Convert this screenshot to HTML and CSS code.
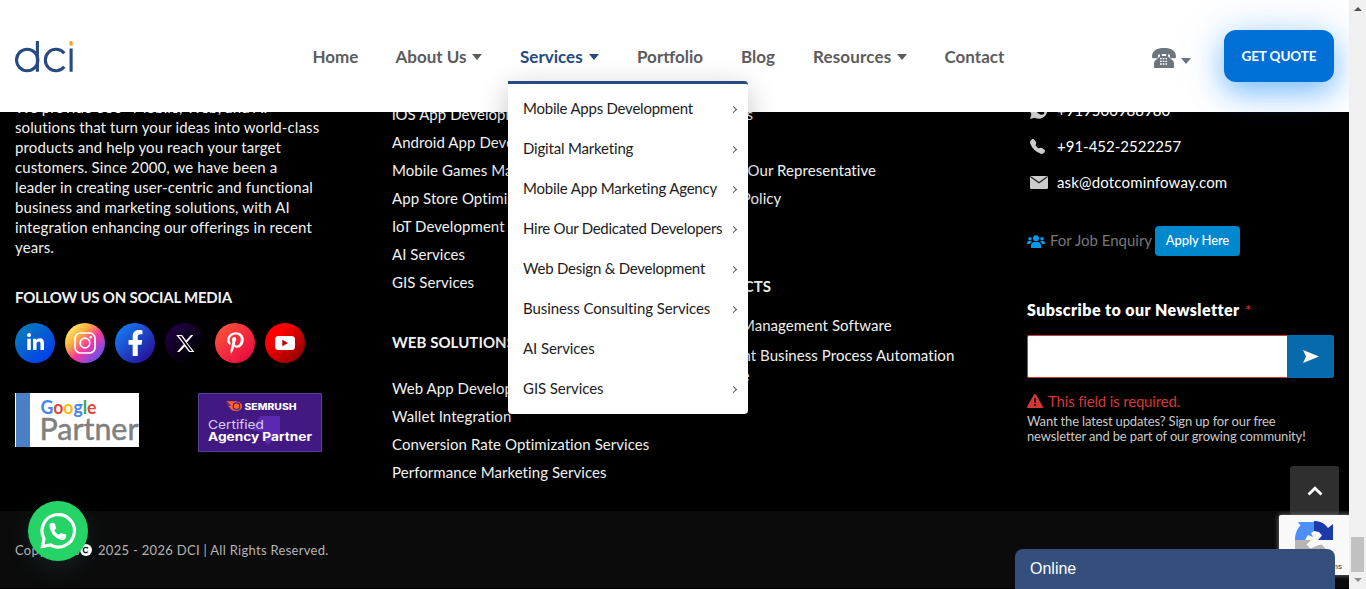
FILE: index.html
```html
<!DOCTYPE html>
<html lang="en">
<head>
<meta charset="utf-8">
<title>DCI</title>
<link rel="stylesheet" href="styles.css">
</head>
<body>
<div class="page">
  <header class="header">
    <a class="logo"><svg width="60" height="34" viewBox="0 0 60 34" fill="none" stroke="#264a82" stroke-width="3.1"><circle cx="12.2" cy="20" r="10.7"/><path d="M22.4 1v30.7M49.3 13.2A10.7 10.7 0 1 0 49.3 26.8M56.1 8.5v23.2"/><path stroke="#f9a02c" d="M56.1 1v4.6"/></svg></a>
    <nav class="nav">
      <a>Home</a>
      <a>About Us<i class="caret"></i></a>
      <a class="active">Services<i class="caret"></i></a>
      <a>Portfolio</a>
      <a>Blog</a>
      <a class="resources">Resources<i class="caret"></i></a>
      <a>Contact</a>
    </nav>
    <div class="call">
      <svg width="24" height="20" viewBox="0 0 24 20"><path fill="#6c757d" d="M0 8.500C0 2.500 5 0 12 0s12 2.500 12 8.500c0 1.300-.3 1.700-1.200 1.700h-3.400c-1 0-1.400-.5-1.400-1.500V6.800c-2-1.100-10-1.100-12 0v1.900c0 1-.4 1.500-1.400 1.500H1.200C.3 10.200 0 9.800 0 8.500zM8 6h2v2h4V6h2v2.200l4.700 4.400c1 1 1.300 2 1.300 3.200V20H2v-4.200c0-1.200.3-2.200 1.300-3.200L8 8.200z"/><path stroke="#fff" stroke-width="1.300" stroke-dasharray="1.700 1" d="M8 10.600h8M8 13.300h8M8 16h8"/></svg>
      <i class="caret"></i>
    </div>
    <a class="quote">GET QUOTE</a>
  </header>

  <div class="menu">
    <a><span class="m1">Mobile Apps Development</span><i></i></a>
    <a><span class="m2">Digital Marketing</span><i></i></a>
    <a><span class="m3">Mobile App Marketing Agency</span><i></i></a>
    <a><span class="m4">Hire Our Dedicated Developers</span><i></i></a>
    <a><span class="m5">Web Design &amp; Development</span><i></i></a>
    <a><span class="m6">Business Consulting Services</span><i></i></a>
    <a><span class="m6">AI Services</span></a>
    <a><span class="m6">GIS Services</span><i></i></a>
  </div>

  <footer class="footer">
    <section class="about">
      <p>We provide 360° Mobile, Web, and AI<br>solutions that turn your ideas into world-class<br>products and help you reach your target<br>customers. Since 2000, we have been a<br>leader in creating user-centric and functional<br>business and marketing solutions, with AI<br>integration enhancing our offerings in recent<br>years.</p>
      <h4>FOLLOW US ON SOCIAL MEDIA</h4>
      <div class="social">
        <a class="li"><svg width="17" height="17" viewBox="0 0 448 448"><path d="M100.300 448H7.400V148.900h92.900zM53.800 108.100C24.100 108.100 0 83.500 0 53.800a53.800 53.800 0 0 1 107.600 0c0 29.700-24.100 54.300-53.800 54.300zM447.900 448h-92.700V302.400c0-34.700-.7-79.200-48.300-79.200-48.300 0-55.700 37.700-55.700 76.700V448h-92.700V148.900h89v40.800h1.300c12.400-23.500 42.700-48.300 87.900-48.300 94 0 111.300 61.900 111.300 142.300V448z"/></svg></a>
        <a class="ig"><svg width="22" height="22" viewBox="0 0 22 22"><g fill="none" stroke="#fff" stroke-width="1.700"><rect x="1" y="1" width="20" height="20" rx="5.500"/><circle cx="11" cy="11" r="4.800"/></g><circle cx="16.700" cy="5.300" r="1.300"/></svg></a>
        <a class="fb"><svg width="17" height="26" viewBox="0 0 320 512"><path d="M279 288l14.300-92.700h-89v-60c0-25.400 12.400-50.100 52.200-50.100H297V6.300S260.400 0 225.400 0c-73.200 0-121.100 44.400-121.100 124.700v70.600H22.900V288h81.400v224h100.200V288z"/></svg></a>
        <a class="tw"><svg width="19" height="19" viewBox="1 2 22 20"><path d="M18.244 2.250h2.800l-7.400 8.460 8.702 11.040H16.170l-5.014-6.417L4.990 21.750H2.180l7.730-8.835L1.254 2.250H8.080l4.713 6.231zm-1.061 18.320h2.433L6.984 3.426H4.317z"/></svg></a>
        <a class="pi"><svg width="17" height="22" viewBox="0 0 384 512"><path d="M204 6.500C101.400 6.500 0 74.900 0 185.600 0 256 39.600 296 63.600 296c9.900 0 15.600-27.600 15.600-35.400 0-9.300-23.700-29.100-23.700-67.800 0-80.400 61.200-137.400 140.400-137.400 68.100 0 118.500 38.700 118.500 109.800 0 53.100-21.300 152.700-90.300 152.700-24.900 0-46.200-18-46.200-43.800 0-37.800 26.400-74.400 26.400-113.400 0-66.200-93.900-54.200-93.900 25.800 0 16.800 2.100 35.400 9.600 50.700-13.800 59.400-42 147.900-42 209.100 0 18.900 2.700 37.500 4.500 56.400 3.400 3.800 1.700 3.400 6.900 1.500 50.400-69 48.600-82.500 71.400-172.800 12.300 23.400 44.100 36 69.300 36 106.200 0 153.900-103.500 153.900-196.800C384 71.300 298.200 6.500 204 6.500z"/></svg></a>
        <a class="yt"><svg width="20" height="14" viewBox="0 0 20 14"><rect width="20" height="14" rx="3.500"/><path fill="#c00000" d="M7.300 3.800v6.400L13 7z"/></svg></a>
      </div>
      <div class="badges">
        <svg width="124" height="54" viewBox="0 0 124 54"><path fill="#fff" d="M0 0h124v54H0z"/><path fill="#4a7fc3" d="M1 0h14v54H1z"/><text class="google" x="25.500" y="20.500" textLength="56" lengthAdjust="spacingAndGlyphs"><tspan fill="#4285f4">G</tspan><tspan fill="#ea4335">o</tspan><tspan fill="#fbbc05">o</tspan><tspan fill="#4285f4">g</tspan><tspan fill="#34a853">l</tspan><tspan fill="#ea4335">e</tspan></text><text class="partner" x="24.500" y="47" textLength="99" lengthAdjust="spacingAndGlyphs">Partner</text></svg>
        <svg width="124" height="59" viewBox="0 0 124 59"><path fill="#421983" stroke="#59409d" d="M.5.500h123v58H.5z"/><path fill="#5b28b0" d="M62 23h20v22h-6l-6 7-6-7v-6l-10-2z"/><path fill="#ff642d" d="M28 8.200h9c4 0 7 2.300 7 5s-2.700 4.800-6 4.800c-3.400 0-6-2-7-4.500l-2-.7h4l-1-1.300-5-.8h5z"/><circle cx="38.500" cy="13.200" r="3.300" fill="none" stroke="#421983" stroke-width="1.100"/><text class="semrush" x="46.500" y="16.500" textLength="52" lengthAdjust="spacingAndGlyphs">SEMRUSH</text><text class="cert" x="10" y="36" textLength="56" lengthAdjust="spacingAndGlyphs">Certified</text><text class="agency" x="10" y="48" textLength="104" lengthAdjust="spacingAndGlyphs">Agency Partner</text></svg>
      </div>
    </section>

    <section class="links">
      <a>iOS App Development</a><a>Android App Development</a><a>Mobile Games Marketing</a><a>App Store Optimization</a><a>IoT Development</a><a>AI Services</a><a>GIS Services</a>
      <h4>WEB SOLUTIONS</h4>
      <a>Web App Development</a><a>Wallet Integration</a><a>Conversion Rate Optimization Services</a><a>Performance Marketing Services</a>
    </section>

    <section class="links company">
      <a>Locations</a><a>Blog</a><a>Become Our Representative</a><a>Privacy Policy</a>
      <h4>PRODUCTS</h4>
      <a class="product">Project Management Software</a>
      <a class="product">Intelligent Business Process Automation<br>Software</a>
    </section>

    <section class="contact">
      <div class="line"><svg width="18" height="18" viewBox="0 0 18 18" fill="#ccc"><path d="M0 18l1.400-4.600A8.500 8.500 0 1 1 4.800 16.700z"/><path fill="#000" d="M5.300 4.500l2-.4 1.200 2.700-1 1.400c.8 1.400 1.800 2.300 3.200 2.900l1.200-1.200 2.500 1.200c0 2-1.600 3-3.400 2.600C8 13 5.200 9.700 4.800 7c-.2-1 .1-2 .5-2.500z"/></svg><span>+919500988980</span></div>
      <div class="line"><svg width="15" height="15" viewBox="0 0 16 16" fill="#ccc"><path d="M1.885.511a1.745 1.745 0 0 1 2.610.163L6.290 2.980c.329.423.445.974.315 1.494l-.547 2.190a.68.68 0 0 0 .178.643l2.457 2.457a.68.68 0 0 0 .644.178l2.189-.547a1.750 1.750 0 0 1 1.494.315l2.306 1.794c.829.645.905 1.870.163 2.611l-1.034 1.034c-.74.740-1.846 1.065-2.877.702a18.600 18.600 0 0 1-7.010-4.420 18.600 18.600 0 0 1-4.420-7.009c-.362-1.030-.037-2.137.703-2.877z"/></svg><span class="tel">+91-452-2522257</span></div>
      <div class="line"><svg width="18" height="13" viewBox="0 0 18 13"><rect width="18" height="13" rx="1.500" fill="#ccc"/><path fill="none" stroke="#222" stroke-width="1.300" d="M1 1l8 5.700L17 1"/></svg><span class="mail">ask@dotcominfoway.com</span></div>
      <div class="job"><svg width="18" height="13" viewBox="0 0 18 13" fill="#0a97ea"><circle cx="9" cy="3.300" r="3"/><circle cx="3" cy="3.700" r="1.800"/><circle cx="15" cy="3.700" r="1.800"/><path d="M4 13v-2.400C4 8.500 5.500 7 7.300 7h3.400C12.500 7 14 8.500 14 10.600V13zM0 9V8c0-1.200.8-2 2-2h2c.5 0 1 .2 1.300.5C4 7.200 3.300 8 3 9zM18 9V8c0-1.200-.8-2-2-2h-2c-.5 0-1 .2-1.300.5 1.300.7 2 1.500 2.300 2.500z"/></svg><span>For Job Enquiry</span><a>Apply Here</a></div>
      <div class="label"><b>Subscribe to our Newsletter</b> <em>*</em></div>
      <div class="form"><input type="text"><button><svg width="16" height="13" viewBox="0 0 16 13"><path fill="#fff" d="M0 0l16 6.500L0 13l3-6.500z"/></svg></button></div>
      <div class="error"><svg width="16" height="14" viewBox="0 0 16 14"><path fill="#d63638" d="M7 .6c.5-.8 1.500-.8 2 0l6.800 11.900c.4.700-.1 1.500-1 1.500H1.200c-.9 0-1.400-.8-1-1.500z"/><path stroke="#000" stroke-width="1.700" d="M8 4.300v4.400M8 10v1.800"/></svg><span>This field is required.</span></div>
      <p class="hint">Want the latest updates? Sign up for our free<br>newsletter and be part of our growing community!</p>
    </section>
  </footer>

  <div class="bottom"><span>Copyrights</span><svg width="12" height="12" viewBox="0 0 12 12"><circle cx="6" cy="6" r="6" fill="#fff"/><path fill="none" stroke="#111" stroke-width="1.300" d="M8 4.400a2.600 2.600 0 1 0 0 3.200"/></svg><span class="rights">2025 - 2026 DCI | All Rights Reserved.</span></div>

  <a class="whatsapp"><svg width="36" height="36" viewBox="0 0 36 36"><path fill="none" stroke="#fff" stroke-width="3.200" d="M2.500 33.500l1.500-8A16.200 16.200 0 1 1 10.500 32z"/><path fill="#fff" d="M9.500 12.500c-.2-1.800 1.500-3 3-2.700l2.500 1 1.200 4.400-1.800 2.200c.8 1.800 2.300 3.400 4.300 4.300l2.300-1.800 5 1.600.3 1.500c-.2 2.400-2 4-4 4-6.800-.8-12.300-7-12.800-14.500z"/></svg></a>
  <a class="top"><svg width="16" height="10" viewBox="0 0 16 10"><path fill="none" stroke="#fff" stroke-width="2.800" d="M1.500 8.500L8 2.300l6.500 6.200"/></svg></a>
  <div class="captcha"><svg width="38" height="37" viewBox="0 0 38 37"><path fill="#4c90f5" d="M0 19C0 13 2 7.500 5.500 4.500L3 1h16v9l-3 2 2 4-5-2-3 5z"/><path fill="#1c3aa9" d="M19 0c6 0 11 2.500 14 7l5-4v16H23l4-4.500-3-3.500-5-1z"/><path fill="#b5b5b5" d="M0 19h16l-4.500 4.500 4 4 7-3 4-1L32 29c-8 9-22 8-28 0L0 33z"/></svg><span>Privacy - Terms</span></div>
  <div class="chat">Online</div>
</div>
<aside class="scroll"><i class="up"></i><i class="thumb"></i><i class="down"></i></aside>
</body>
</html>
```
FILE: styles.css
```css
* { box-sizing: border-box; }
body { margin: 0; width: 1366px; height: 589px; overflow: hidden; display: flex; background: #000; font-family: Lato, sans-serif; font-size: 15px; }
svg { display: block; flex: none; }
h4, p { margin: 0; }
.page { position: relative; width: 1349px; height: 589px; overflow: hidden; color: #f2f2f2; }

/* header */
.header { position: absolute; z-index: 2; top: 0; left: 0; width: 100%; height: 112px; display: flex; background: #fff; padding: 0 15px; }
.logo { width: 297.500px; padding-top: 40px; }
.nav { width: 839.500px; height: 113px; display: grid; grid-template-columns: 83px 124.500px 117px 104px 72px 131.500px 80px; align-items: center; font-size: 17px; font-weight: 700; color: #5c5c5c; white-space: nowrap; }
.nav a { display: flex; align-items: center; }
.nav .active { color: #264a82; }
.resources { letter-spacing: .15px; }
.caret { border: 5px solid transparent; border-top: 6px solid; border-bottom: 0; margin-left: 6px; }
.call { width: 72px; padding-top: 48px; display: flex; color: #6c757d; }
.call .caret { margin: 10px 0 0 5px; }
.quote { width: 110px; height: 52px; margin-top: 30px; border-radius: 12px; background: #006fd6; color: #fff; font-size: 13.500px; letter-spacing: -.1px; font-weight: 700; line-height: 52px; text-align: center; white-space: nowrap; box-shadow: 0 10px 30px rgba(0,132,255,.5), 0 0 60px rgba(0,132,255,.12); }

/* dropdown */
.menu { position: absolute; z-index: 3; left: 508px; top: 81px; width: 240px; height: 333px; background: #fff; border-top: 3px solid #264a82; border-radius: 0 4px 4px 4px; padding: 4px 11px 0 15px; box-shadow: 0 8px 30px rgba(0,0,0,.24); color: #1c1c1c; font-size: 15px; }
.menu a { display: flex; justify-content: space-between; align-items: center; height: 40px; white-space: nowrap; }
.menu i { width: 5px; height: 5px; border: solid #555; border-width: 1.500px 1.500px 0 0; transform: translate(-1px, 1px) rotate(45deg); }
.m1, .m5 { letter-spacing: -.23px; }
.m2, .m3 { letter-spacing: -.18px; }
.m4 { letter-spacing: -.27px; }
.m6 { letter-spacing: -.08px; }

/* footer columns */
.footer { height: 511px; padding: 97px 15px 0; display: grid; grid-template-columns: 377px 298px 337px 307px; background: #000; white-space: nowrap; }
.footer h4 { font-size: 15px; font-weight: 700; line-height: 20px; }
.about p { line-height: 20px; letter-spacing: .11px; }
.about h4 { margin-top: 30px; letter-spacing: -.22px; }
.social { display: flex; gap: 10px; margin-top: 16px; }
.social a { width: 40px; height: 40px; border-radius: 50%; display: flex; align-items: center; justify-content: center; fill: #fff; }
.li { background: linear-gradient(135deg, #0a85b5, #0033f5); }
.li svg { margin-top: -3px; }
.ig { background: linear-gradient(135deg, #fff080 8%, #fcb43a 32%, #f8389b 55%, #9a47d8 75%, #3f55f5); }
.fb { background: linear-gradient(135deg, #1389ff, #2a008c); }
.tw { background: linear-gradient(135deg, #26004f, #000 80%); }
.pi { background: linear-gradient(135deg, #ff5a3a, #e80042); }
.yt { background: linear-gradient(135deg, #f00 30%, #7a0000); }
.badges { display: flex; gap: 59px; margin-top: 30px; }
.google { font: 700 19px Lato, sans-serif; }
.partner { font: 31px Lato, sans-serif; fill: #808080; stroke: #808080; stroke-width: .5px; }
.semrush { font: 800 9px Inter, sans-serif; fill: #fff; }
.cert { font: 12px Inter, sans-serif; fill: #d9cff0; }
.agency { font: 700 11.500px Inter, sans-serif; fill: #fff; }
.links { padding-top: 3px; letter-spacing: .06px; }
.links a { display: block; height: 28px; line-height: 28px; }
.links h4 { margin: 36px 0 22px; height: 20px; }
.company h4 { margin: 64px 0 19px; }
.links .product { height: 30px; line-height: 20px; }

/* contact */
.line { display: flex; align-items: center; height: 36px; padding-left: 3px; }
.line:first-child { margin-top: -5px; }
.line svg { margin-right: auto; }
.line span { width: 277px; color: #fff; }
.mail { letter-spacing: .16px; }
.job { display: flex; align-items: center; height: 30px; margin-top: 26px; color: #777; font-size: 15px; }
.job span { width: 105px; margin: -2px 0 0 5px; }
.job a { width: 85px; height: 30px; border-radius: 4px; background: #0088cf; color: #fff; font-size: 13px; letter-spacing: -.1px; font-weight: 500; line-height: 29px; text-align: center; }
.label { margin-top: 43px; line-height: 22px; font-size: 16px; color: #fff; }
.label b { font-weight: 800; letter-spacing: .42px; }
.label em { font-style: normal; color: #d63638; margin-left: 1px; }
.form { display: flex; height: 43px; margin-top: 14px; }
.form input { width: 260px; border: 1px solid #d63638; border-right: 0; border-radius: 2px 0 0 2px; background: #fff; padding: 0; }
.form button { width: 47px; border: 0; padding: 0; background: #066aab; border-radius: 0 2px 2px 0; display: grid; place-items: center; }
.error { display: flex; align-items: center; height: 20px; margin-top: 13px; gap: 5px; color: #d63638; letter-spacing: -.17px; }
.hint { font-size: 13px; line-height: 15px; margin-top: 3px; color: #c9c9c9; letter-spacing: -.15px; }

.bottom { height: 77px; background: #0b0b0b; padding: 1px 15px 0; display: flex; align-items: center; font-size: 13px; color: #b5b5b5; white-space: nowrap; }
.bottom span { width: 65px; letter-spacing: .3px; }
.bottom svg { margin-right: 6px; }
.bottom .rights { width: auto; }

/* floating widgets */
.whatsapp { position: absolute; left: 28px; top: 501px; width: 60px; height: 60px; border-radius: 50%; background: #25d366; display: grid; place-items: center; box-shadow: 0 8px 25px rgba(80,160,170,.14); }
.top { position: absolute; left: 1290px; top: 466px; width: 49px; height: 49px; border-radius: 3px; background: #2f2f2f; display: grid; place-items: center; }
.captcha { position: absolute; left: 1279px; top: 515px; width: 256px; height: 60px; border-radius: 2px; background: #f9f9f9; box-shadow: 0 0 5px #808080; padding: 6px 0 0 16px; }
.captcha span { display: block; font: 8px/10px "Liberation Sans", sans-serif; color: #333; margin-top: 4px; margin-left: -8px; white-space: nowrap; }
.chat { position: absolute; left: 1015px; top: 549px; width: 320px; height: 40px; border-radius: 8px 8px 0 0; background: #354f7c; color: #fff; font: 16px/39px "Liberation Sans", sans-serif; padding-left: 15px; }

/* scrollbar */
.scroll { width: 17px; height: 589px; background: #f0f0f0; display: flex; flex-direction: column; align-items: center; }
.up { border: 4px solid transparent; border-top: 0; border-bottom-color: #505050; margin-top: 7px; }
.thumb { width: 13px; height: 35px; background: #c1c1c1; margin-top: 526px; }
.down { border: 4px solid transparent; border-bottom: 0; border-top-color: #909090; margin-top: 6px; }
```
